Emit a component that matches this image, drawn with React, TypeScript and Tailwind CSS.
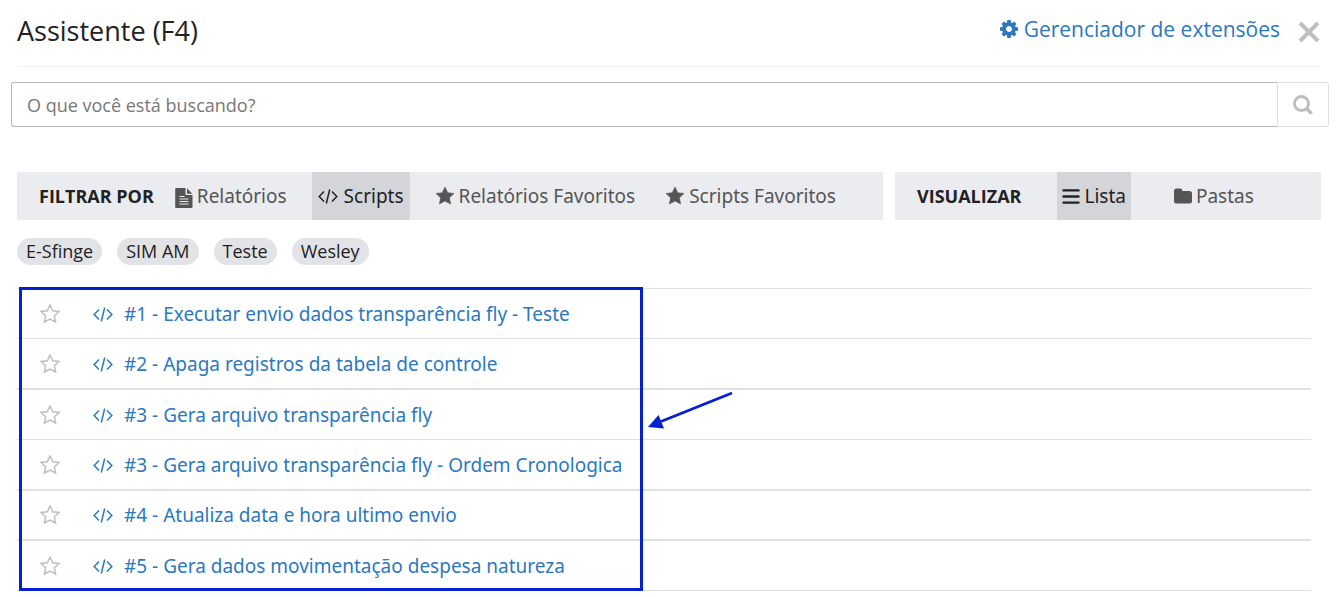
import React from "react";

const scripts = [
  { title: "#1 - Executar envio dados transparência fly - Teste", row: "h-[50px] border-b" },
  { title: "#2 - Apaga registros da tabela de controle", row: "h-[51px] border-b-2" },
  { title: "#3 - Gera arquivo transparência fly", row: "h-[50px] border-b" },
  { title: "#3 - Gera arquivo transparência fly - Ordem Cronologica", row: "h-[51px] border-b-2" },
  { title: "#4 - Atualiza data e hora ultimo envio", row: "h-[50px] border-b-2" },
  { title: "#5 - Gera dados movimentação despesa natureza", row: "h-[50px] border-b" },
];

const tags = ["E-Sfinge", "SIM AM", "Teste", "Wesley"];

function CogIcon() {
  return (
    <svg viewBox="128 128 1536 1536" className="size-[18px]" fill="currentColor" aria-hidden="true">
      <path d="M1152 896q0-106-75-181t-181-75-181 75-75 181 75 181 181 75 181-75 75-181zm512-109v222q0 12-8 23t-20 13l-185 28q-19 54-39 91 35 50 107 138 10 12 10 25t-9 23q-27 37-99 108t-94 71q-12 0-26-9l-138-108q-44 23-91 38-16 136-29 186-7 28-36 28h-222q-14 0-24.5-8.5t-11.5-21.5l-28-184q-49-16-90-37l-141 107q-10 9-25 9-14 0-25-11-126-114-165-168-7-10-7-23 0-12 8-23 15-21 51-66.5t54-70.5q-27-50-41-99l-183-27q-13-2-21-12.5t-8-23.5v-222q0-12 8-23t19-13l186-28q14-46 39-92-40-57-107-138-10-12-10-24 0-10 9-23 26-36 98.5-107.5t94.5-71.5q13 0 26 10l138 107q44-23 91-38 16-136 29-186 7-28 36-28h222q14 0 24.5 8.5t11.5 21.5l28 184q49 16 90 37l142-107q9-9 24-9 13 0 25 10 129 119 165 170 7 8 7 22 0 12-8 23-15 21-51 66.5t-54 70.5q26 50 41 98l183 28q13 2 21 12.5t8 23.5z" />
    </svg>
  );
}

function CloseIcon() {
  return (
    <svg viewBox="0 0 22 22" className="size-[22px]" fill="none" stroke="currentColor" strokeWidth="4" aria-hidden="true">
      <path d="M2 2l18 18M20 2L2 20" />
    </svg>
  );
}

function SearchIcon() {
  return (
    <svg viewBox="0 0 20 20" className="size-5" fill="none" stroke="currentColor" aria-hidden="true">
      <circle cx="8.5" cy="8.5" r="7" strokeWidth="2.8" />
      <path d="M13.6 13.6l5 5" strokeWidth="3.4" strokeLinecap="butt" />
    </svg>
  );
}

function FileIcon() {
  return (
    <svg viewBox="0 0 18 20" className="mt-1 h-5 w-[18px]" fill="currentColor" aria-hidden="true">
      <path d="M1.2 0H10.5v6.3q0 .8.8.8H17.500v11.900q0 1-1 1H1.200q-1 0-1-1V1q0-1 1-1z" />
      <path d="M12 0.300L17.300 5.800H12z" />
      <path d="M4.500 8.500h5M4.500 11h9M4.500 13.500h9M4.500 16h9" stroke="#ebecf0" strokeWidth="1.200" />
    </svg>
  );
}

function CodeIcon() {
  return (
    <svg viewBox="0 0 20 16" className="h-4 w-5" fill="none" stroke="currentColor" strokeWidth="1.5" aria-hidden="true">
      <path d="M6 3.600L1.200 8.500l4.800 4.900M14 3.600L18.800 8.500l-4.800 4.900M11.700 1.500L8.300 15.500" />
    </svg>
  );
}

const starPoints =
  "10,1 12.700,6.700 19,7.500 14.400,11.800 15.600,18 10,15 4.400,18 5.600,11.800 1,7.500 7.300,6.700";

function StarIcon({ filled }: { filled?: boolean }) {
  return (
    <svg
      viewBox="0 0 20 20"
      className="size-5"
      fill={filled ? "currentColor" : "none"}
      stroke="currentColor"
      strokeWidth={filled ? "0.6" : "1.5"}
      strokeLinejoin="miter"
      aria-hidden="true"
    >
      <polygon points={starPoints} />
    </svg>
  );
}

function ListIcon() {
  return (
    <svg viewBox="0 0 18 16" className="h-4 w-[18px]" stroke="currentColor" strokeWidth="2.400" strokeLinecap="round" aria-hidden="true">
      <path d="M1.500 2.400h15M1.500 8.500h15M1.500 14.600h15" />
    </svg>
  );
}

function FolderIcon() {
  return (
    <svg viewBox="0 0 18 16" className="h-4 w-[18px]" fill="currentColor" aria-hidden="true">
      <path d="M0 3Q0 .5 2.500.500H6Q8.300.500 8.300 2.900H15.500Q18 2.900 18 5.400V13Q18 15.500 15.500 15.500H2.500Q0 15.500 0 13z" />
    </svg>
  );
}

export default function App() {
  return (
    <main className="bg-white pb-1.5 font-['Open_Sans','Noto_Sans',sans-serif] text-[#222]">
      <header className="ml-[17px] mr-4 flex h-[67px] items-start justify-between border-b border-[#f3f3f4]">
        <h1 className="pt-3 text-[27px] leading-[38px]">Assistente (F4)</h1>
        <div className="flex items-start gap-[18px] pt-3.5">
          <a href="#extensoes" className="flex items-center gap-1.5 text-[21px] leading-[30px] text-[#2b78bf]">
            <CogIcon />
            Gerenciador de extensões
          </a>
          <button type="button" aria-label="Fechar" className="pt-[7px] text-[#bfbfbf]">
            <CloseIcon />
          </button>
        </div>
      </header>

      <form className="ml-[11px] mr-[7px] mt-[15px] flex h-[45px]" onSubmit={(e) => e.preventDefault()}>
        <input
          type="search"
          aria-label="O que você está buscando?"
          placeholder="O que você está buscando?"
          className="min-w-0 flex-1 rounded-l-[3px] border border-r-0 border-[#bababa] px-[15px] pt-0.5 text-[18px] placeholder:text-[#777] focus:outline-none"
        />
        <button
          type="submit"
          aria-label="Buscar"
          className="flex w-[52px] items-center justify-center rounded-r-[3px] border border-[#dedfe2] text-[#bdbdbd]"
        >
          <SearchIcon />
        </button>
      </form>

      <div className="ml-[17px] mr-[15px] mt-[45px] grid grid-cols-[866fr_426fr] gap-3 font-['Noto_Sans','Open_Sans',sans-serif] text-[19px] text-[#555]">
        <div className="flex h-12 items-center bg-[#ebecf0] pl-[22px]">
          <strong className="mr-4 font-['Open_Sans','Noto_Sans',sans-serif] text-[18px] text-[#222]">FILTRAR POR</strong>
          <button type="button" className="flex h-full items-center gap-1 px-[5px]">
            <FileIcon />
            Relatórios
          </button>
          <button type="button" className="ml-5 flex h-full items-center gap-1.5 bg-[#d4d5d9] px-1.5 text-[#222]">
            <CodeIcon />
            Scripts
          </button>
          <button type="button" className="ml-5 flex h-full items-center gap-1 px-[5px]">
            <StarIcon filled />
            Relatórios Favoritos
          </button>
          <button type="button" className="ml-5 flex h-full items-center gap-1 px-[5px]">
            <StarIcon filled />
            Scripts Favoritos
          </button>
        </div>
        <div className="flex h-12 items-center bg-[#ebecf0] pl-[22px]">
          <strong className="mr-9 font-['Open_Sans','Noto_Sans',sans-serif] text-[18px] text-[#222]">VISUALIZAR</strong>
          <button type="button" className="flex h-full items-center gap-1 bg-[#d4d5d9] px-[5px] text-[#222]">
            <ListIcon />
            Lista
          </button>
          <button type="button" className="ml-[38px] flex h-full items-center gap-1 px-[5px]">
            <FolderIcon />
            Pastas
          </button>
        </div>
      </div>

      <div className="ml-[17px] mt-[18px] flex gap-[15px]">
        {tags.map((tag) => (
          <button key={tag} type="button" className="h-[27px] rounded-full bg-[#e2e3e7] px-[9px] text-[18px] leading-[27px]">
            {tag}
          </button>
        ))}
      </div>

      <section className="relative ml-[17px] mr-[25px] mt-[23px]">
        <ul className="border-t border-[#e0e1e6]">
          {scripts.map((script) => (
            <li key={script.title} className={`flex items-center border-[#e0e1e6] pl-[23px] ${script.row}`}>
              <button type="button" aria-label="Favoritar" className="mr-[33px] text-[#bfbfbf]">
                <StarIcon />
              </button>
              <a href="#script" className="flex items-center gap-[11px] font-['Noto_Sans','Open_Sans',sans-serif] text-[19px] leading-7 text-[#2b78bf]">
                <CodeIcon />
                {script.title}
              </a>
            </li>
          ))}
        </ul>
        <div className="pointer-events-none absolute -top-px bottom-0 left-0.5 w-[624px] border-[3px] border-[#0420d0]" />
        <svg viewBox="0 0 88 42" className="pointer-events-none absolute left-[630px] top-[102px] h-[42px] w-[88px]" aria-hidden="true">
          <path d="M85 3L14 31.500" stroke="#0420d0" strokeWidth="2.800" />
          <path d="M1 37L11.500 25L17 38.500z" fill="#0420d0" />
        </svg>
      </section>
    </main>
  );
}
